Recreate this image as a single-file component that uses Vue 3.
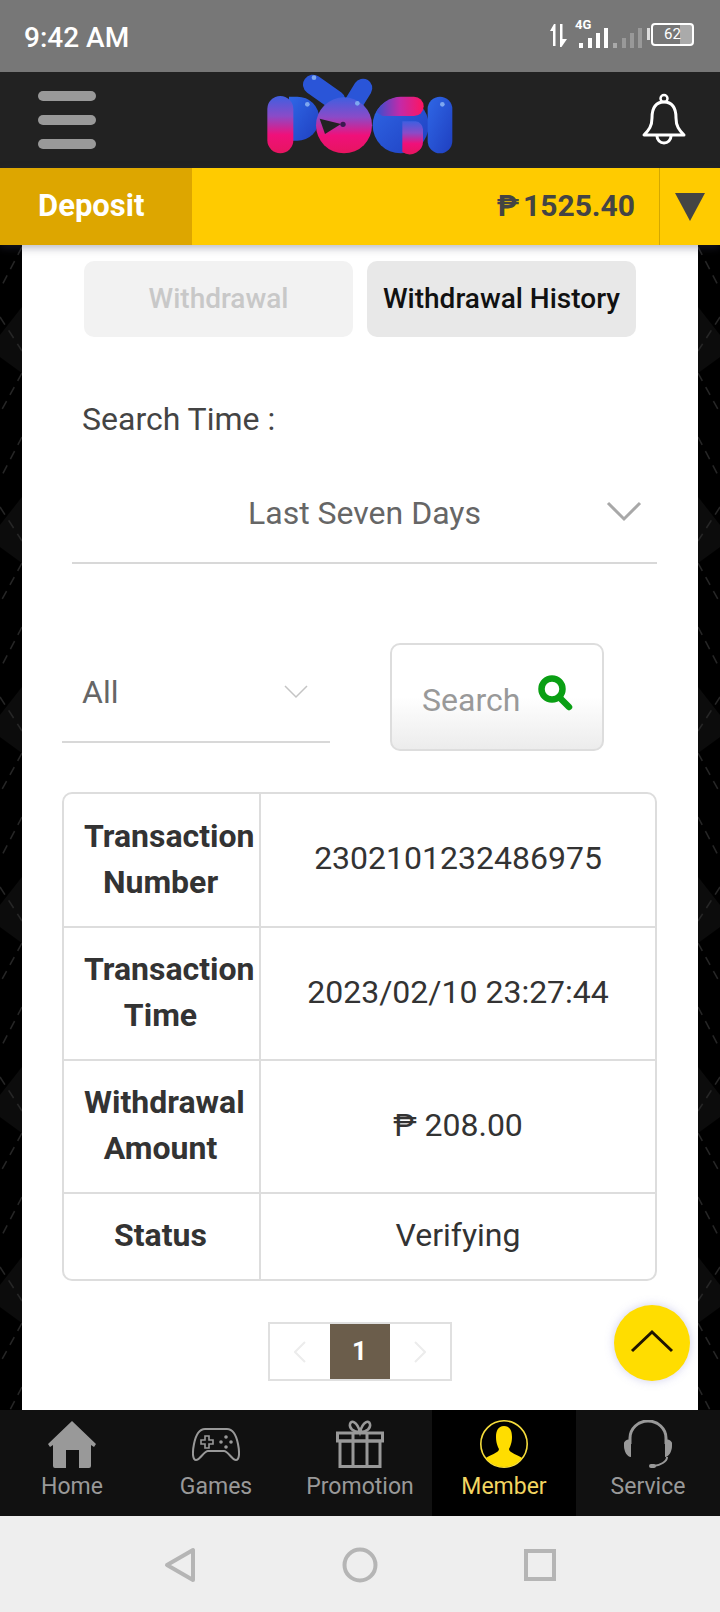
<template>
  <div class="phone">
    <div class="status-bar">
      <span class="clock">9:42 AM</span>
      <div class="status-icons">
        <svg width="20" height="24" viewBox="0 0 20 24" class="arrows">
          <path d="M2 8 L6 1 L7.5 1 L7.5 23 L5 23 L5 8 Z" fill="#fff" />
          <path d="M12 1 L14.5 1 L14.5 16 L19 16 L13.5 24 L12 24 Z" fill="#fff" />
        </svg>
        <div class="signal">
          <span class="net">4G</span>
          <svg width="64" height="22" viewBox="0 0 64 22">
            <rect x="0" y="16" width="4" height="5" fill="#fff" />
            <rect x="9" y="11" width="4" height="10" fill="#fff" />
            <rect x="17" y="6" width="4" height="15" fill="#fff" />
            <rect x="25" y="1" width="4" height="20" fill="#fff" />
            <rect x="34" y="16" width="4" height="5" fill="#aaa" />
            <rect x="43" y="11" width="4" height="10" fill="#999" />
            <rect x="51" y="6" width="4" height="15" fill="#999" />
            <rect x="59" y="1" width="4" height="20" fill="#999" />
          </svg>
        </div>
        <div class="battery">
          <i class="battery-cap"></i>
          <div class="battery-body">
            <span>62</span>
          </div>
        </div>
      </div>
    </div>

    <header class="top-bar">
      <button class="menu-btn">
        <i></i><i></i><i></i>
      </button>
      <svg class="logo" width="230" height="100" viewBox="0 0 690 300">
        <defs>
          <linearGradient id="pk" x1="0" y1="0" x2="0" y2="1">
            <stop offset="0" stop-color="#3f5fe0" />
            <stop offset="0.35" stop-color="#8a4bc8" />
            <stop offset="0.68" stop-color="#f0107a" />
            <stop offset="1" stop-color="#e61560" />
          </linearGradient>
          <linearGradient id="bl" x1="0" y1="0" x2="1" y2="1">
            <stop offset="0" stop-color="#2f67e6" />
            <stop offset="1" stop-color="#1f3fc0" />
          </linearGradient>
          <linearGradient id="gt" x1="0" y1="0" x2="1" y2="0">
            <stop offset="0" stop-color="#3550d0" />
            <stop offset="0.5" stop-color="#c32aa8" />
            <stop offset="1" stop-color="#ff1460" />
          </linearGradient>
        </defs>
        <path d="M150 92 H175 A66 66 0 0 1 175 224 H150 Z" fill="url(#bl)" />
        <rect x="85" y="90" width="78" height="172" rx="39" fill="url(#pk)" />
        <path d="M222 56 L290 104" stroke="#2a55d8" stroke-width="60" stroke-linecap="round" />
        <path d="M372 66 L345 110" stroke="#2a55d8" stroke-width="56" stroke-linecap="round" />
        <circle cx="315" cy="178" r="84" fill="url(#pk)" />
        <path d="M242 158 L306 174 L258 204 Z" fill="#222" />
        <circle cx="312" cy="175" r="8" fill="#3a1a50" />
        <circle cx="485" cy="178" r="84" fill="url(#bl)" />
        <path d="M412 138 A84 84 0 0 1 485 92 H525 A29 29 0 0 1 525 150 H430 Z" fill="url(#gt)" />
        <path d="M490 166 H530 A24 24 0 0 1 552 190 V222 A40 40 0 0 1 490 258 Z" fill="url(#pk)" />
        <rect x="566" y="92" width="74" height="170" rx="37" fill="url(#bl)" />
        <circle cx="205" cy="115" r="7" fill="#7fa8f0" />
        <circle cx="225" cy="35" r="7" fill="#7fa8f0" />
        <circle cx="355" cy="112" r="7" fill="#7fa8f0" />
        <circle cx="610" cy="115" r="7" fill="#7fa8f0" />
      </svg>
      <svg class="bell" width="46" height="52" viewBox="0 0 46 52">
        <path d="M23 9 C13 9 11 17 11 25 C11 33 8 37 3 42 H43 C38 37 35 33 35 25 C35 17 33 9 23 9 Z" fill="none" stroke="#fff" stroke-width="3" stroke-linejoin="round" />
        <circle cx="23" cy="5.5" r="3.5" fill="none" stroke="#fff" stroke-width="2.5" />
        <path d="M16 43 A7 7 0 0 0 30 43" fill="none" stroke="#fff" stroke-width="3" />
      </svg>
    </header>

    <div class="wallet-bar">
      <div class="deposit">Deposit</div>
      <div class="amount"><span class="peso">₱</span>1525.40</div>
      <div class="caret"><i></i></div>
    </div>

    <main class="page">
      <section class="card">
        <div class="tabs">
          <div class="tab tab-off">Withdrawal</div>
          <div class="tab tab-on">Withdrawal History</div>
        </div>

        <div class="search-label">Search Time :</div>
        <div class="time-select">
          <span>Last Seven Days</span>
          <svg width="36" height="22" viewBox="0 0 36 22" class="time-chevron">
            <path d="M2 3 L18 19 L34 3" fill="none" stroke="#a8a8a8" stroke-width="3" />
          </svg>
        </div>

        <div class="filter-row">
          <div class="type-select">
            <span>All</span>
            <svg width="24" height="14" viewBox="0 0 24 14">
              <path d="M1 1 L12 12 L23 1" fill="none" stroke="#c4c4c4" stroke-width="1.5" />
            </svg>
          </div>
          <button class="search-btn">
            <span>Search</span>
            <svg width="36" height="36" viewBox="0 0 36 36">
              <circle cx="14" cy="14" r="10.5" fill="none" stroke="#0a9f14" stroke-width="6.5" />
              <path d="M21 22 L31 32" stroke="#0a9f14" stroke-width="6.5" stroke-linecap="round" />
            </svg>
          </button>
        </div>

        <div class="record">
          <div v-for="row in rows" :key="row.label" class="record-row" :style="{ height: row.height + 'px' }">
            <div class="record-label"><div>{{ row.label }}</div></div>
            <div class="record-value">{{ row.value }}</div>
          </div>
        </div>

        <div class="pager">
          <div class="pager-arrow">
            <svg width="12" height="22" viewBox="0 0 12 22"><path d="M11 1 L1 11 L11 21" fill="none" stroke="#ececec" stroke-width="2" /></svg>
          </div>
          <div class="pager-num">1</div>
          <div class="pager-arrow">
            <svg width="12" height="22" viewBox="0 0 12 22"><path d="M1 1 L11 11 L1 21" fill="none" stroke="#ececec" stroke-width="2" /></svg>
          </div>
        </div>
      </section>

      <button class="to-top">
        <svg width="44" height="24" viewBox="0 0 44 24">
          <path d="M2 22 L22 3 L42 22" fill="none" stroke="#201400" stroke-width="3" />
        </svg>
      </button>
    </main>

    <nav class="tabbar">
      <div v-for="item in navItems" :key="item.name" class="nav-item" :class="{ active: item.name === 'Member' }">
        <svg width="48" height="48" viewBox="0 0 48 48">
          <g v-if="item.name === 'Home'">
            <path d="M24 1 L48 24 L46 27 L43 25 V46 A2 2 0 0 1 41 48 H31 V30 H18 V48 H7 A2 2 0 0 1 5 46 V25 L2 27 L0 24 Z" fill="#999" />
          </g>
          <g v-else-if="item.name === 'Games'" fill="none" stroke="#999" stroke-width="2">
            <path d="M13 9 H35 C41 9 44 14 46 24 C48 34 47 40 44 40 C40 40 36 31 32 31 H16 C12 31 8 40 4 40 C1 40 0 34 2 24 C4 14 7 9 13 9 Z" />
            <path d="M13 16 V20 H9 V24 H13 V28 H17 V24 H21 V20 H17 V16 Z" stroke-width="1.6" />
            <circle cx="34" cy="17" r="1.8" fill="#999" stroke="none" />
            <circle cx="34" cy="27" r="1.8" fill="#999" stroke="none" />
            <circle cx="29" cy="22" r="1.8" fill="#999" stroke="none" />
            <circle cx="39" cy="22" r="1.8" fill="#999" stroke="none" />
          </g>
          <g v-else-if="item.name === 'Promotion'" fill="none" stroke="#999" stroke-width="3">
            <rect x="1.5" y="13" width="45" height="8" />
            <rect x="4" y="21" width="40" height="25.5" />
            <path d="M17 13 V46 M31 13 V46" />
            <path d="M24 12 C17 12 13 8 14 4 C15 0 21 1 24 12 C27 1 33 0 34 4 C35 8 31 12 24 12 Z" stroke-width="2.5" />
          </g>
          <g v-else-if="item.name === 'Member'">
            <ellipse cx="24" cy="24" rx="23.2" ry="23.2" fill="none" stroke="#f5dc3c" stroke-width="1.6" />
            <path d="M24 6 C30 6 32 11 32 17 C32 23 30 27 29 29 C29 33 39 35 42 38 C37 44 31 47 24 47 C17 47 11 44 6 38 C9 35 19 33 19 29 C18 27 16 23 16 17 C16 11 18 6 24 6 Z" fill="#ffdd00" />
          </g>
          <g v-else>
            <path d="M6 24 V18 A18 17 0 0 1 42 18 V24" fill="none" stroke="#999" stroke-width="3" />
            <path d="M7 20 A5 5 0 0 0 0 26 C0 31 3 37 7 37 Z" fill="#999" />
            <path d="M41 20 A5 5 0 0 1 48 26 C48 31 45 37 41 37 Z" fill="#999" />
            <path d="M43 37 C43 42 36 45 30 46" fill="none" stroke="#999" stroke-width="2" />
            <rect x="25" y="44" width="7" height="4" rx="2" fill="#999" />
          </g>
        </svg>
        <span>{{ item.name }}</span>
      </div>
    </nav>

    <div class="system-nav">
      <div class="system-key">
        <svg width="32" height="36" viewBox="0 0 32 36"><path d="M29 3 V33 L3 18 Z" fill="none" stroke="#b5b5b5" stroke-width="4" stroke-linejoin="round" /></svg>
      </div>
      <div class="system-key">
        <svg width="36" height="36" viewBox="0 0 36 36"><circle cx="18" cy="18" r="15.5" fill="none" stroke="#b5b5b5" stroke-width="4" /></svg>
      </div>
      <div class="system-key">
        <svg width="32" height="32" viewBox="0 0 32 32"><rect x="2" y="2" width="28" height="28" fill="none" stroke="#b5b5b5" stroke-width="4" /></svg>
      </div>
    </div>
  </div>
</template>

<script setup>
const rows = [
  { label: 'Transaction Number', value: '2302101232486975', height: 134 },
  { label: 'Transaction Time', value: '2023/02/10 23:27:44', height: 133 },
  { label: 'Withdrawal Amount', value: '₱ 208.00', height: 133 },
  { label: 'Status', value: 'Verifying', height: 85 }
]

const navItems = [
  { name: 'Home' },
  { name: 'Games' },
  { name: 'Promotion' },
  { name: 'Member' },
  { name: 'Service' }
]
</script>

<style>
html,
body {
  margin: 0;
  background: #000;
}
</style>

<style scoped>
.phone {
  width: 720px;
  height: 1612px;
  display: flex;
  flex-direction: column;
  font-family: Roboto, "Liberation Sans", sans-serif;
  overflow: hidden;
}

.status-bar {
  height: 72px;
  flex: none;
  background: #777;
  display: flex;
  align-items: center;
  justify-content: space-between;
  padding: 0 26px 0 24px;
  box-sizing: border-box;
  color: #fff;
}

.clock {
  font-size: 28px;
  font-weight: 500;
  margin-top: 2px;
}

.status-icons {
  display: flex;
  align-items: flex-start;
  margin-top: 2px;
}

.arrows {
  margin-right: 4px;
  margin-top: 1px;
}

.signal {
  position: relative;
  width: 75px;
  box-sizing: border-box;
  padding: 5px 0 0 7px;
}

.net {
  position: absolute;
  top: -5px;
  left: 3px;
  font-size: 13px;
  font-weight: 700;
}

.battery {
  display: flex;
  align-items: center;
  margin-top: 1px;
}

.battery-cap {
  width: 3px;
  height: 12px;
  background: #ddd;
  margin-right: 1px;
}

.battery-body {
  width: 39px;
  height: 19px;
  border: 2px solid #fff;
  border-radius: 4px;
  background: linear-gradient(90deg, #777 70%, #aaa 70%);
  display: flex;
  align-items: center;
  justify-content: center;
  font-size: 15px;
}

.top-bar {
  height: 96px;
  flex: none;
  background: #222;
  display: flex;
  align-items: center;
  justify-content: space-between;
  padding: 0 33px 0 38px;
  box-sizing: border-box;
}

.menu-btn {
  width: 58px;
  padding: 0;
  border: none;
  background: none;
  display: flex;
  flex-direction: column;
  gap: 14px;
}

.menu-btn i {
  display: block;
  height: 10px;
  border-radius: 5px;
  background: #999;
}

.logo {
  margin: -8px 0 0 -30px;
  filter: blur(0.5px);
}

.bell {
  margin-top: -3px;
}

.wallet-bar {
  height: 77px;
  flex: none;
  background: #ffcb00;
  display: flex;
  align-items: stretch;
  position: relative;
  z-index: 2;
  box-shadow: 0 3px 8px rgba(60, 60, 90, 0.35);
}

.deposit {
  width: 192px;
  box-sizing: border-box;
  padding-left: 38px;
  background: #dda600;
  color: #fff;
  font-size: 31px;
  font-weight: 700;
  line-height: 75px;
}

.amount {
  flex: 1;
  text-align: right;
  padding-right: 24px;
  font-size: 30px;
  font-weight: 700;
  line-height: 75px;
  color: #444;
}

.peso {
  margin-right: 4px;
}

.caret {
  width: 61px;
  border-left: 1px solid #d4a800;
  display: flex;
  align-items: center;
  justify-content: center;
  box-sizing: border-box;
}

.caret i {
  width: 0;
  height: 0;
  border-left: 15px solid transparent;
  border-right: 15px solid transparent;
  border-top: 28px solid #444;
}

.page {
  flex: 1;
  min-height: 0;
  position: relative;
  padding: 0 22px;
  background-color: #000;
  background-repeat: repeat-y;
  background-position: 0 0, 100% 0;
  background-image:
    url("data:image/svg+xml,%3Csvg xmlns='http://www.w3.org/2000/svg' width='22' height='190'%3E%3Cpath d='M0 90 L22 62 V128 L0 112 Z' fill='%230c0c0c'/%3E%3Cpath d='M22 2 L0 44 M0 72 L22 106 M22 128 L0 168' fill='none' stroke='%23262626' stroke-width='1.5' stroke-dasharray='9 7'/%3E%3C/svg%3E"),
    url("data:image/svg+xml,%3Csvg xmlns='http://www.w3.org/2000/svg' width='22' height='190'%3E%3Cpath d='M22 90 L0 62 V128 L22 112 Z' fill='%230c0c0c'/%3E%3Cpath d='M0 2 L22 44 M22 72 L0 106 M0 128 L22 168' fill='none' stroke='%23262626' stroke-width='1.5' stroke-dasharray='9 7'/%3E%3C/svg%3E");
}

.card {
  height: 100%;
  background: #fff;
  padding: 16px 41px 0 40px;
  box-sizing: border-box;
}

.tabs {
  display: flex;
  gap: 14px;
  padding: 0 21px 0 22px;
}

.tab {
  flex: 1;
  height: 76px;
  border-radius: 10px;
  text-align: center;
  line-height: 76px;
  font-size: 28px;
  font-weight: 500;
  white-space: nowrap;
}

.tab-off {
  background: #f2f2f2;
  color: #c8c8c8;
}

.tab-on {
  background: #e8e8e8;
  color: #111;
}

.search-label {
  margin: 64px 0 0 20px;
  font-size: 32px;
  line-height: 36px;
  color: #444;
}

.time-select {
  position: relative;
  height: 99px;
  margin: 26px 0 0 10px;
  border-bottom: 2px solid #d8d8d8;
  display: flex;
  align-items: center;
  justify-content: center;
  font-size: 32px;
  color: #666;
}

.time-chevron {
  position: absolute;
  right: 15px;
  top: 37px;
}

.filter-row {
  display: flex;
  align-items: flex-start;
  margin-top: 79px;
}

.type-select {
  width: 268px;
  height: 100px;
  box-sizing: border-box;
  border-bottom: 2px solid #d8d8d8;
  padding: 0 22px 0 20px;
  display: flex;
  align-items: center;
  justify-content: space-between;
  font-size: 32px;
  color: #666;
}

.search-btn {
  width: 214px;
  height: 108px;
  margin-left: 60px;
  padding: 0 28px 0 30px;
  box-sizing: border-box;
  border: 2px solid #ddd;
  border-radius: 10px;
  background: linear-gradient(#fff 50%, #ececec 100%);
  display: flex;
  align-items: center;
  justify-content: space-between;
  font-family: inherit;
  font-size: 32px;
  color: #999;
}

.search-btn span {
  margin-top: 6px;
}

.search-btn svg {
  margin-top: -8px;
}

.record {
  margin-top: 41px;
  border: 2px solid #ddd;
  border-radius: 10px;
  overflow: hidden;
}

.record-row {
  display: flex;
  box-sizing: border-box;
  border-bottom: 2px solid #ddd;
}

.record-row:last-child {
  border-bottom: none;
}

.record-label {
  width: 197px;
  flex: none;
  box-sizing: border-box;
  padding: 0 22px 3px 20px;
  border-right: 2px solid #ddd;
  display: flex;
  align-items: center;
  font-size: 32px;
  font-weight: 700;
  line-height: 46px;
  color: #333;
}

.record-label div {
  width: 100%;
  text-align: center;
}

.record-value {
  flex: 1;
  display: flex;
  align-items: center;
  justify-content: center;
  font-size: 32px;
  color: #333;
  padding-bottom: 4px;
}

.pager {
  width: 184px;
  height: 59px;
  margin: 41px auto 0;
  box-sizing: border-box;
  border: 2px solid #e0e0e0;
  display: flex;
}

.pager-arrow {
  flex: 1;
  display: flex;
  align-items: center;
  justify-content: center;
}

.pager-num {
  width: 60px;
  background: #6b5d4b;
  color: #fff;
  font-size: 26px;
  font-weight: 700;
  text-align: center;
  line-height: 55px;
}

.to-top {
  position: absolute;
  left: 614px;
  top: 1060px;
  width: 76px;
  height: 76px;
  padding: 0;
  border: none;
  border-radius: 50%;
  background: #ffdd00;
  box-shadow: 0 0 10px rgba(120, 120, 200, 0.35);
  display: flex;
  align-items: center;
  justify-content: center;
}

.to-top svg {
  margin-top: -4px;
}

.tabbar {
  height: 106px;
  flex: none;
  background: #111;
  display: flex;
}

.nav-item {
  width: 144px;
  display: flex;
  flex-direction: column;
  align-items: center;
  padding-top: 10px;
  box-sizing: border-box;
  font-size: 23px;
  color: #999;
}

.nav-item span {
  margin-top: 5px;
}

.nav-item.active {
  background: #000;
  color: #f2d561;
}

.system-nav {
  height: 96px;
  flex: none;
  background: #eee;
  display: flex;
  justify-content: center;
  align-items: center;
}

.system-key {
  width: 180px;
  display: flex;
  justify-content: center;
  margin-top: 2px;
}
</style>
